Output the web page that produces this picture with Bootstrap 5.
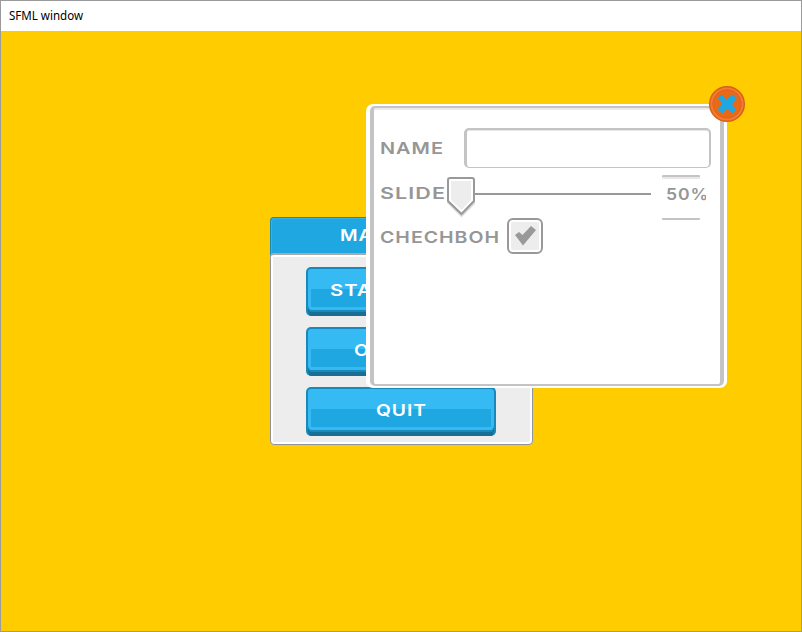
<!DOCTYPE html>
<html lang="en">
<head>
<meta charset="utf-8">
<title>SFML window</title>
<link href="https://cdn.jsdelivr.net/npm/bootstrap@5.3.0/dist/css/bootstrap.min.css" rel="stylesheet">
<style>
body{width:802px;height:632px;background:#fc0;overflow:hidden}
.app-window{width:802px;height:632px;border:1px solid #9b9b9b}
.titlebar{height:30px;padding-left:8px;background:#fff;color:#000}
.titlebar svg{display:block}
.titlebar text{font:12px "Noto Sans","Open Sans",sans-serif;letter-spacing:0}
.stage{background:#fc0}
.ui-text{font-family:Inter,Roboto,sans-serif;font-size:16px;font-weight:600;letter-spacing:.8px}
.menu-window{left:269px;top:186px;width:263px;height:228px;background:#ededed;border:1px solid #8e939d;border-radius:4px;box-shadow:inset -2px -2px #fff,inset 2px 0 #fff}
.menu-head{height:40px;margin:-1px -1px 0;background:#1ea7e1;border:1px solid #1989b8;border-bottom:0;border-radius:4px 4px 0 0;box-shadow:inset 1px 1px #35b1e6}
.menu-body{margin:-4px 1px 0 -1px;padding-top:14px;gap:11px;position:relative}
.menu-body::before{content:"";position:absolute;left:0;right:-2px;top:0;height:6px;background:#ededed;border:1px solid #999ea6;border-top:2px solid #aaa;border-bottom:0;border-radius:4px 4px 0 0;box-shadow:inset 0 2px #fff,inset 2px 0 #fff,inset -2px 0 #fff}
.game-btn{width:190px;height:49px;padding:0;border:2px solid #1a89ba;border-bottom:0;border-radius:5px;box-shadow:inset 0 -4px #186f95,inset 0 -6px #1a89ba;background:#35baf3;overflow:hidden}
.game-btn::before{content:"";position:absolute;left:3px;right:3px;top:20px;height:18px;background:#1fa7e1}
.game-btn svg,.menu-head svg{position:relative;display:block}
.dialog-window{left:365px;top:73px;width:361px;height:284px;padding:2px 3px 2px 4px;background:#fff;border-radius:7px}
.dialog-face{height:280px;border:solid #c4c4c4;border-width:2px 4px;border-radius:5px;background:#fff;box-shadow:inset 0 2px #ebebeb;padding:20px 9px 0 6px}
.field-label{display:block;flex:none}
.name-input{width:247px;height:40px;border:solid #c4c4c4;border-width:2px 2px 1px 3px;border-radius:5px;box-shadow:inset 0 1px #e6e6e6;padding:0;background:#fff}
.name-input:focus{border-color:#c4c4c4;box-shadow:inset 0 1px #e6e6e6}
.percent{width:44px;height:45px;flex:none;margin-top:-1px;margin-bottom:-2px}
.close-btn{left:342px;top:-19px;width:38px;height:38px}
</style>
</head>
<body>
<main class="app-window d-flex flex-column">
  <header class="titlebar"><svg width="90" height="30"><text x="0" y="19" textLength="74" lengthAdjust="spacingAndGlyphs">SFML window</text></svg></header>
  <section class="stage position-relative flex-grow-1">
    <div class="menu-window position-absolute">
      <div class="menu-head"><svg width="261" height="36" fill="#fff"><text class="ui-text" x="69" y="23" textLength="122" lengthAdjust="spacingAndGlyphs">MAIN MENU</text></svg></div>
      <div class="menu-body d-flex flex-column align-items-center">
        <button class="btn game-btn position-relative"><svg width="186" height="46" fill="#fff"><text class="ui-text" x="22" y="26" textLength="142" lengthAdjust="spacingAndGlyphs">START GAME</text></svg></button>
        <button class="btn game-btn position-relative"><svg width="186" height="46" fill="#fff"><text class="ui-text" x="46" y="26" textLength="94" lengthAdjust="spacingAndGlyphs">OPTIONS</text></svg></button>
        <button class="btn game-btn position-relative"><svg width="186" height="46" fill="#fff"><text class="ui-text" x="68" y="26" textLength="51" lengthAdjust="spacingAndGlyphs">QUIT</text></svg></button>
      </div>
    </div>
    <div class="dialog-window position-absolute">
      <div class="dialog-face">
        <div class="d-flex">
          <svg class="field-label" width="84" height="40" fill="#969696"><text class="ui-text" x="0" y="26" textLength="64" lengthAdjust="spacingAndGlyphs">NAME</text></svg>
          <input class="form-control name-input" aria-label="Name">
        </div>
        <div class="d-flex mt-2">
          <svg class="field-label" width="282" height="42">
            <text class="ui-text" x="0" y="23" fill="#969696" textLength="66" lengthAdjust="spacingAndGlyphs">SLIDE</text>
            <path d="M94 17H271v2H94z" fill="#999"/>
            <path d="M67 4V27L81.500 41.500 95 28V26z" fill="#ddd"/>
            <path d="M70 2H92Q94 2 94 4V25L81.500 38 68 25V4Q68 2 70 2Z" fill="#fff" stroke="#999" stroke-width="2"/>
            <path d="M71 5H91V24L81.500 34 71 24Z" fill="#ededed"/>
          </svg>
          <svg class="percent">
            <path d="M0 2V1Q0 0 1 0H37Q38 0 38 1V2zM0 43H38V44Q38 45 37 45H1Q0 45 0 44z" fill="#c4c4c4"/>
            <path d="M0 2H38V4H0z" fill="#e8e8e8"/>
            <text class="ui-text" x="4" y="25" fill="#969696" textLength="43" lengthAdjust="spacingAndGlyphs">50%</text>
          </svg>
        </div>
        <div class="d-flex">
          <svg class="field-label" width="127" height="36" fill="#969696"><text class="ui-text" x="0" y="25" textLength="120" lengthAdjust="spacingAndGlyphs">CHECHBOH</text></svg>
          <svg width="36" height="36"><rect x="1" y="1" width="34" height="34" rx="5" fill="#fff" stroke="#999" stroke-width="2"/><rect x="4" y="4" width="28" height="28" rx="2" fill="#ededed"/><path d="M8 17L12 14 15.500 17 24 8 29 12 16 27.500z" fill="#999"/></svg>
        </div>
      </div>
      <svg class="close-btn position-absolute" viewBox="0 0 38 38"><circle cx="19" cy="19" r="17.300" fill="#f47a30" stroke="#d8611c" stroke-width="1.500"/><circle cx="19" cy="19" r="14.200" fill="#e86a17" stroke="#d8611c" stroke-width=".8"/><path d="M10.500 13.500L13.500 10 19 15 24.500 10 28 13.500 23.500 19 28 24.500 25 28 19 23.500 14 28 10 24.500 15 19z" fill="#1ea7e1" stroke="#1ea7e1" stroke-width="1" stroke-linejoin="round"/></svg>
    </div>
  </section>
</main>
<script src="https://cdn.jsdelivr.net/npm/bootstrap@5.3.0/dist/js/bootstrap.bundle.min.js"></script>
</body>
</html>
